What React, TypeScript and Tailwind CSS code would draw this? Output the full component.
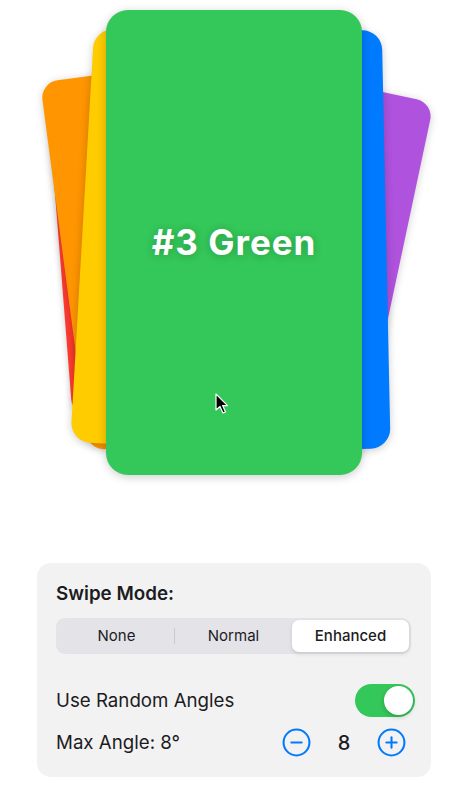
import { CircleMinus, CirclePlus } from 'lucide-react';

interface Card {
  id: number;
  label: string;
  color: string;
  cx: number;
  cy: number;
  scale: number;
  angle: number;
}

// back to front, last one is the top card
const cards: Card[] = [
  { id: 1, label: '#0 Red', color: '#ff3b30', cx: 148.5, cy: 245, scale: 0.7, angle: -4.5 },
  { id: 2, label: '#1 Orange', color: '#ff9500', cx: 166, cy: 253, scale: 0.8, angle: -7.5 },
  { id: 6, label: '#5 Purple', color: '#af52de', cx: 295, cy: 263, scale: 0.8, angle: 12 },
  { id: 3, label: '#2 Yellow', color: '#ffcc00', cx: 196, cy: 241, scale: 0.89, angle: 3.3 },
  { id: 5, label: '#4 Blue', color: '#007aff', cx: 271, cy: 241, scale: 0.9, angle: -1.2 },
  { id: 4, label: '#3 Green', color: '#34c759', cx: 234, cy: 242.5, scale: 1, angle: 0 },
];

const CARD_W = 256;
const CARD_H = 465;

const Cursor = () => (
  <svg width="14" height="22" viewBox="0 0 14 22" className="absolute left-[215px] top-[393px]">
    <path d="M1 1 L1 17 L5 13.5 L8 20 L10.5 19 L7.6 12.6 L12.5 12.6 Z" fill="#000" stroke="#fff" strokeWidth="1.2" strokeLinejoin="round" />
  </svg>
);

const App = () => {
  return (
    <div className="w-[468px] h-[800px] bg-white overflow-hidden font-['Inter','Liberation_Sans',sans-serif] text-[#1c1c1e]">
      <div className="relative h-[563px]">
        {cards.map((card, i) => (
          <div
            key={card.id}
            className="absolute rounded-[22px] shadow-[0_2px_10px_rgba(0,0,0,0.2)] flex items-center justify-center"
            style={{
              left: card.cx - CARD_W / 2,
              top: card.cy - CARD_H / 2,
              width: CARD_W,
              height: CARD_H,
              backgroundColor: card.color,
              transform: `rotate(${card.angle}deg) scale(${card.scale})`,
            }}
          >
            {/* only the top card's label can be seen */}
            {i === cards.length - 1 && (
              <span className="text-white text-[35px] font-bold tracking-[1px] [text-shadow:0_1px_8px_rgba(0,0,0,0.22)]">
                {card.label}
              </span>
            )}
          </div>
        ))}
        <Cursor />
      </div>

      <div className="mx-[37px] rounded-[14px] bg-[#f2f2f3] pt-[20px] pl-[19px] pr-[16px] pb-[19px]">
        <div className="text-[18.8px] leading-[22px] font-semibold">Swipe Mode:</div>

        <div className="mt-[13px] mr-[4px] h-[36px] rounded-[9px] bg-[#e3e3e8] p-[2px] grid grid-cols-3 text-[15px]">
          <div className="relative flex items-center justify-center">
            None
            <span className="absolute right-0 top-[8px] bottom-[8px] w-px bg-[#c9c9ce]" />
          </div>
          <div className="flex items-center justify-center">Normal</div>
          <div className="flex items-center justify-center rounded-[7px] bg-white shadow-[0_2px_4px_rgba(0,0,0,0.12)] font-medium">
            Enhanced
          </div>
        </div>

        <div className="mt-[30px] flex items-center justify-between">
          <span className="text-[18.7px] leading-[22px]">Use Random Angles</span>
          <div className="w-[60px] h-[33px] rounded-full bg-[#34c759] p-[2px] flex justify-end">
            <div className="w-[29px] h-[29px] rounded-full bg-white shadow-[0_2px_5px_rgba(0,0,0,0.2)]" />
          </div>
        </div>

        <div className="mt-[10px] flex items-center">
          <span className="text-[18.7px] leading-[22px] flex-1">Max Angle: 8°</span>
          <div className="flex items-center mr-[8px]">
            <CircleMinus size={31} strokeWidth={1.6} color="#007aff" />
            <span className="w-[64px] text-center text-[20px] font-medium">8</span>
            <CirclePlus size={31} strokeWidth={1.6} color="#007aff" />
          </div>
        </div>
      </div>
    </div>
  );
};

export default App;
